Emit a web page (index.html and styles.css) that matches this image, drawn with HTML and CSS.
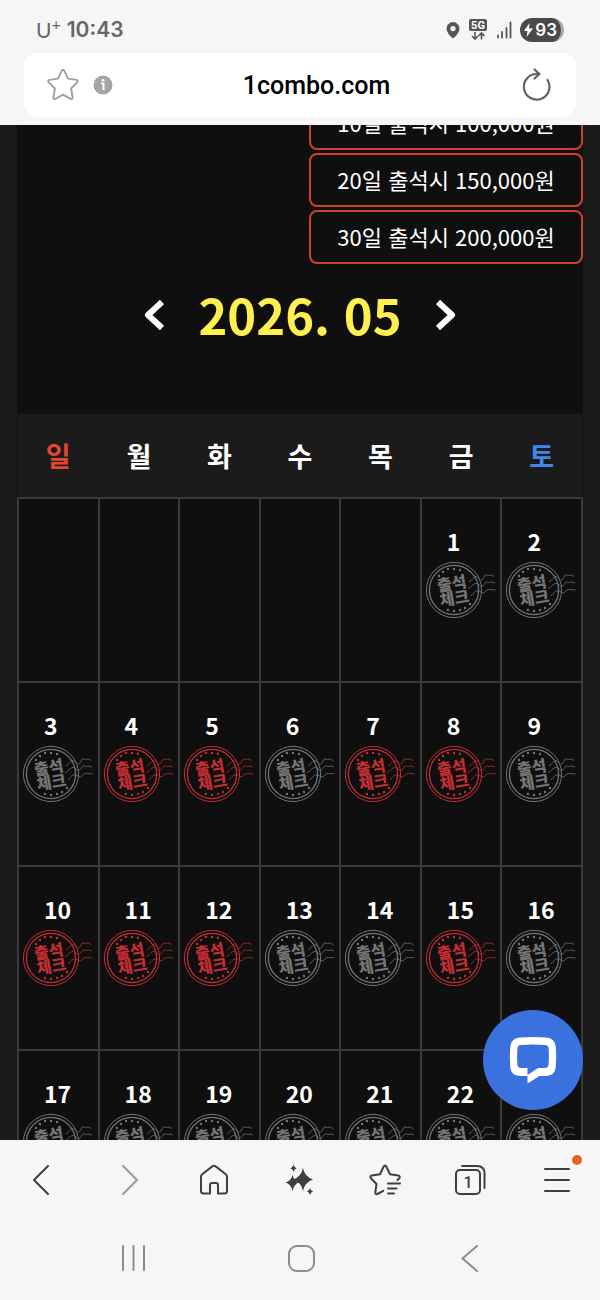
FILE: index.html
```html
<!DOCTYPE html>
<html lang="ko">
	<head>
		<meta charset="utf-8">
		<meta name="viewport" content="width=device-width, initial-scale=1">
		<title>1combo.com</title>
		<link rel="stylesheet" href="styles.css">
	</head>
	<body>
		<!-- stamp shared by all days, coloured by the cell -->
		<svg class="defs" aria-hidden="true">
			<symbol id="stamp" viewBox="0 0 72 58">
				<g fill="none" stroke="currentColor">
					<circle cx="29" cy="29" r="27.6" stroke-width="1"/>
					<circle cx="29" cy="29" r="24.6" stroke-width="1.3"/>
					<g stroke-width="1" opacity=".75">
						<path d="M44 21q3-2 5-4.500t5 1 4.500-.5 3-3 4.500 0l3 1.500"/>
						<path d="M43 28q4-3 6-5t5 1 5-.5 3.500-2.500 4.500 0l3 1"/>
						<path d="M46 35q3-4 5-5t5 1 4.500-.5 4-2 4.500 0l1.500 1"/>
					</g>
				</g>
				<g fill="currentColor">
					<circle cx="14" cy="15" r="1.2"/><circle cx="18" cy="11" r="1.2"/><circle cx="23" cy="8" r="1.2"/><circle cx="29" cy="8" r="1.2"/><circle cx="35" cy="9" r="1.2"/>
					<circle cx="23" cy="49" r="1.2"/><circle cx="29" cy="50" r="1.2"/><circle cx="35" cy="49" r="1.2"/><circle cx="40" cy="47" r="1.2"/><circle cx="45" cy="43" r="1.2"/>
					<g class="stamp-text" transform="rotate(-10 29 29)">
						<text x="28" y="28">출석</text>
						<text x="28" y="43">체크</text>
					</g>
				</g>
			</symbol>
		</svg>
		<header class="top">
			<div class="status">
				<div class="status-left"><span class="carrier">U<sup>+</sup></span><b>10:43</b></div>
				<div class="status-right">
					<svg width="14" height="18" viewBox="0 0 14 18"><path fill="#555" fill-rule="evenodd" d="M7 1a6.500 6.500 0 0 0-6.500 6.500C.5 11 4 15 7 17.500 10 15 13.500 11 13.500 7.500A6.500 6.500 0 0 0 7 1zm0 4a2.600 2.600 0 1 1 0 5.200A2.600 2.600 0 0 1 7 5z"/></svg>
					<svg width="20" height="22" viewBox="0 0 20 22"><rect x="1" y="0" width="18" height="12" rx="2" fill="#555"/><text class="net" x="10" y="10" text-anchor="middle">5G</text><path d="M7 13v7M4 17l3 3 3-3M13.500 20.500v-6.500M10.500 17l3-3 3 3" fill="none" stroke="#555" stroke-width="1.600"/></svg>
					<svg width="16" height="18" viewBox="0 0 16 18"><path d="M2 14.500v2M6 11v5.500M10.500 7v9.500M14.500 1.500v15" stroke="#555" stroke-width="1.800" stroke-linecap="round"/></svg>
					<span class="battery"><svg width="9" height="14" viewBox="0 0 9 14"><path fill="#fff" d="M5.500 0 0 8h3.500L2.500 14 9 5.500H5z"/></svg>93</span>
				</div>
			</div>
			<div class="address">
				<div class="address-icons">
					<button aria-label="즐겨찾기"><svg width="34" height="34" viewBox="0 0 34 34"><path d="M15.800 2.600q1.200-1.800 2.400 0l3.800 8 8.600 1.300q2 .7.700 2.300l-6.200 6.300 1.500 9q-.1 2-2 1.400L17 26.600l-7.600 4.300q-1.900.6-2-1.400l1.500-9-6.200-6.300q-1.300-1.600.7-2.300L12 10.600z" fill="none" stroke="#a0a0a2" stroke-width="1.900" stroke-linejoin="round"/></svg></button>
					<button aria-label="사이트 정보"><svg width="20" height="20" viewBox="0 0 20 20"><circle cx="10" cy="10" r="9.500" fill="#a5a5a7"/><path d="M8 8.500h2.500v6.500" fill="none" stroke="#fff" stroke-width="2"/><circle cx="10" cy="5.300" r="1.400" fill="#fff"/></svg></button>
				</div>
				<span class="url">1combo.com</span>
				<button aria-label="새로고침"><svg width="32" height="36" viewBox="0 0 32 36"><path d="M27.500 13A12.800 12.800 0 1 1 16.500 7h3M14.500 2.500l5 4.500-5 4.500" fill="none" stroke="#626264" stroke-width="2.200" stroke-linecap="round" stroke-linejoin="round"/></svg></button>
			</div>
		</header>

		<main class="page">
			<div class="content">
				<ul class="bonus">
					<li>10일 출석시 100,000원</li>
					<li>20일 출석시 150,000원</li>
					<li>30일 출석시 200,000원</li>
				</ul>
				<div class="month">
					<button aria-label="이전 달"><svg width="22" height="32" viewBox="0 0 22 32"><path d="M19 3 5 16l14 13" fill="none" stroke="#fff" stroke-width="6" stroke-linejoin="round"/></svg></button>
					<h1>2026. 05</h1>
					<button aria-label="다음 달"><svg width="22" height="32" viewBox="0 0 22 32"><path d="M3 3l14 13L3 29" fill="none" stroke="#fff" stroke-width="6" stroke-linejoin="round"/></svg></button>
				</div>
				<table class="calendar">
					<thead>
						<tr><th class="sun">일</th><th>월</th><th>화</th><th>수</th><th>목</th><th>금</th><th class="sat">토</th></tr>
					</thead>
					<tbody>
						<tr>
							<td></td><td></td><td></td><td></td><td></td>
							<td><b>1</b><svg class="stamp"><use href="#stamp"/></svg></td>
							<td><b>2</b><svg class="stamp"><use href="#stamp"/></svg></td>
						</tr>
						<tr>
							<td><b>3</b><svg class="stamp"><use href="#stamp"/></svg></td>
							<td class="on"><b>4</b><svg class="stamp"><use href="#stamp"/></svg></td>
							<td class="on"><b>5</b><svg class="stamp"><use href="#stamp"/></svg></td>
							<td><b>6</b><svg class="stamp"><use href="#stamp"/></svg></td>
							<td class="on"><b>7</b><svg class="stamp"><use href="#stamp"/></svg></td>
							<td class="on"><b>8</b><svg class="stamp"><use href="#stamp"/></svg></td>
							<td><b>9</b><svg class="stamp"><use href="#stamp"/></svg></td>
						</tr>
						<tr>
							<td class="on"><b>10</b><svg class="stamp"><use href="#stamp"/></svg></td>
							<td class="on"><b>11</b><svg class="stamp"><use href="#stamp"/></svg></td>
							<td class="on"><b>12</b><svg class="stamp"><use href="#stamp"/></svg></td>
							<td><b>13</b><svg class="stamp"><use href="#stamp"/></svg></td>
							<td><b>14</b><svg class="stamp"><use href="#stamp"/></svg></td>
							<td class="on"><b>15</b><svg class="stamp"><use href="#stamp"/></svg></td>
							<td><b>16</b><svg class="stamp"><use href="#stamp"/></svg></td>
						</tr>
						<tr>
							<td><b>17</b><svg class="stamp"><use href="#stamp"/></svg></td>
							<td><b>18</b><svg class="stamp"><use href="#stamp"/></svg></td>
							<td><b>19</b><svg class="stamp"><use href="#stamp"/></svg></td>
							<td><b>20</b><svg class="stamp"><use href="#stamp"/></svg></td>
							<td><b>21</b><svg class="stamp"><use href="#stamp"/></svg></td>
							<td><b>22</b><svg class="stamp"><use href="#stamp"/></svg></td>
							<td><b>23</b><svg class="stamp"><use href="#stamp"/></svg></td>
						</tr>
					</tbody>
				</table>
			</div>
			<button class="chat" aria-label="채팅"><svg width="48" height="48" viewBox="0 0 48 48"><path fill="#fff" fill-rule="evenodd" d="M11 1.500Q24 .3 37 1.500 46 2 46.800 11q.8 10 0 20Q46 39.500 37 40h-6.500L18.500 47.500V40H11Q2 39.500 1.200 31q-.8-10 0-20Q2 2 11 1.500zM12 9Q8.600 9.200 8.400 12.500q-.6 8 0 16Q8.600 31.800 12 32h6.500v7L29 32h7q3.400-.2 3.600-3.500.6-8 0-16Q39.400 9.200 36 9q-12-.8-24 0z"/></svg></button>
		</main>

		<footer class="bottom">
			<nav class="toolbar">
				<button aria-label="뒤로"><svg width="36" height="36" viewBox="0 0 36 36"><path d="M23 4 9 18l14 14"/></svg></button>
				<button class="off" aria-label="앞으로"><svg width="36" height="36" viewBox="0 0 36 36"><path d="M12 4l14 14-14 14"/></svg></button>
				<button aria-label="홈"><svg width="36" height="36" viewBox="0 0 36 36"><path d="M5 15q0-2 1.500-3L16 4.600q2-1.500 4 0L29.500 12q1.500 1 1.500 3v14q0 2.500-2.500 2.500H22V23q0-2-2-2h-4q-2 0-2 2v8.500H7.500Q5 31.500 5 29z"/></svg></button>
				<button aria-label="AI"><svg width="36" height="36" viewBox="0 0 36 36"><path class="solid" d="M21 6q1.500 8.500 10 11.500-8.500 3-10 11.500-1.500-8.500-10-11.500Q19.500 14.500 21 6zM10.500 13q1.500 6 6.500 7.500-5 1.500-6.500 8.500-1.500-7-7-8.500 5.500-1.500 7-7.500zM11.500 2.500q.6 3 3.200 3.800-2.600.8-3.200 3.800-.6-3-3.200-3.800 2.600-.8 3.200-3.800zM28 26q.6 2.800 3 3.500-2.400.7-3 3.500-.6-2.800-3-3.500 2.400-.7 3-3.500z"/></svg></button>
				<button aria-label="북마크"><svg width="36" height="36" viewBox="0 0 36 36"><path d="M29.500 18l1.800-1.800q1.300-2-.9-2.700L22 12.300 18.400 4.700q-1.400-2.400-2.800 0L12 12.300 3.800 13.500q-2.400.7-.9 2.700L8.500 22 7.300 30.500q0 2.200 2 1.500l6-3.200M20 21.500h12M20 26.500h8.500M20 31.500h6"/></svg></button>
				<button aria-label="탭"><svg width="36" height="36" viewBox="0 0 36 36"><rect x="3" y="8" width="24" height="24" rx="4"/><path d="M9 4h15q7.500 0 7.500 7.500V26"/><text class="tabs" x="15" y="26" text-anchor="middle">1</text></svg></button>
				<button class="menu" aria-label="메뉴"><svg width="36" height="36" viewBox="0 0 36 36"><path d="M6 7h24M6 18h24M6 29h24"/></svg></button>
			</nav>
			<nav class="system">
				<button aria-label="최근 앱"><svg width="32" height="32" viewBox="0 0 32 32"><path d="M7 4v24M17.500 4v24M28 4v24"/></svg></button>
				<button aria-label="홈 화면"><svg width="32" height="32" viewBox="0 0 32 32"><rect x="5" y="4" width="25" height="25" rx="8"/></svg></button>
				<button aria-label="이전"><svg width="32" height="32" viewBox="0 0 32 32"><path d="M25 4 10.500 16.500 25 29"/></svg></button>
			</nav>
		</footer>
	</body>
</html>
```
FILE: styles.css
```css
*{ box-sizing: border-box; }
html{ font-family: "Noto Sans CJK KR", "Noto Sans", sans-serif; }
body{ display: flex; flex-direction: column; height: 100vh; margin: 0; overflow: hidden; background: #f6f6f6; }
button{ display: flex; align-items: center; justify-content: center; padding: 0; border: 0; background: none; cursor: pointer; }
svg{ display: block; }
.defs{ display: none; }

/* status and address bar */
.top{ flex: none; padding: 0 24px 8px; font-family: Roboto, sans-serif; }
.status{ display: flex; justify-content: space-between; align-items: center; height: 53px; padding: 6px 12px 0; color: #666; }
.status-left{ display: flex; align-items: center; gap: 6px; font-size: 21px; line-height: 28px; }
.status-left b{ font-family: Inter, sans-serif; font-weight: 600; }
.carrier{ font-family: Lato, sans-serif; }
.carrier sup{ font-size: 16px; line-height: 0; }
.status-right{ display: flex; align-items: center; gap: 8px; }
.net{ font: 700 11px Roboto, sans-serif; fill: #fff; }
.battery{ display: flex; align-items: center; gap: 2px; height: 24px; padding: 0 4px; border-right: 3px solid #aaa; border-radius: 12px; background: #4a4a4a; color: #fff; font: 600 17px Inter, sans-serif; }
.address{ display: flex; align-items: center; height: 64px; padding: 0 24px 0 22px; border-radius: 14px; background: #fff; }
.address-icons{ display: flex; align-items: center; gap: 13px; }
.url{ flex: 1; padding-top: 2px; color: #000; font-size: 25px; font-weight: 500; line-height: 32px; text-align: center; }

/* attendance page */
.page{ position: relative; flex: 1; min-height: 0; overflow: hidden; padding: 0 17px; background: #1b1b1b; }
.content{ min-height: 100%; background: #0f0f0f; }
.bonus{ display: flex; flex-direction: column; align-items: flex-end; gap: 3px; margin: 0; padding: 0; list-style: none; }
.bonus li{ width: 274px; height: 54px; border: 2px solid #cf412c; border-radius: 8px; color: #fff; font-size: 22px; line-height: 48px; text-align: center; }
.bonus li:first-child{ margin-top: -29px; }
.month{ display: flex; justify-content: center; align-items: center; gap: 33px; height: 150px; padding-bottom: 48px; }
.month h1{ margin: 0; padding-bottom: 2px; color: #fff04f; font-size: 49px; line-height: 72px; }
.calendar{ width: 100%; table-layout: fixed; border-collapse: collapse; border-spacing: 0; color: #fff; }
.calendar th{ height: 84px; padding: 0; background: #1b1b1b; font-size: 27px; line-height: 36px; }
.calendar .sun{ color: #e4452f; }
.calendar .sat{ color: #4286ec; }
.calendar td{ height: 184px; padding: 24px 0 0 3px; border: 2px solid #3a3a3a; vertical-align: top; color: #757575; }
.calendar td.on{ color: #c32d34; }
.calendar b{ display: block; margin-bottom: 2px; padding-left: 22px; color: #fff; font-size: 23px; line-height: 36px; }
.stamp{ width: 72px; height: 58px; }
.stamp-text{ font: 900 16px "Noto Sans CJK KR", sans-serif; text-anchor: middle; }
.chat{ position: absolute; right: 17px; bottom: 30px; width: 100px; height: 100px; border-radius: 50%; background: #3b71df; }

/* browser and phone navigation */
.bottom{ flex: none; }
.bottom svg{ fill: none; stroke: #3f3f3f; stroke-width: 2; stroke-linecap: round; stroke-linejoin: round; }
.toolbar{ display: grid; grid-template-columns: repeat(7, 1fr); height: 80px; }
.toolbar .off svg{ stroke: #9a9a9a; }
.toolbar .solid{ fill: #3f3f3f; stroke: none; }
.toolbar .tabs{ fill: #3f3f3f; stroke: none; font: 500 16px Roboto, sans-serif; }
.menu{ position: relative; }
.menu:after{ content: ""; position: absolute; top: 15px; right: 18px; width: 10px; height: 10px; border-radius: 50%; background: #e0662e; }
.system{ display: grid; grid-template-columns: repeat(3, 1fr); height: 80px; padding: 0 48px 4px; }
.system svg{ stroke: #8c8c8c; }
```
